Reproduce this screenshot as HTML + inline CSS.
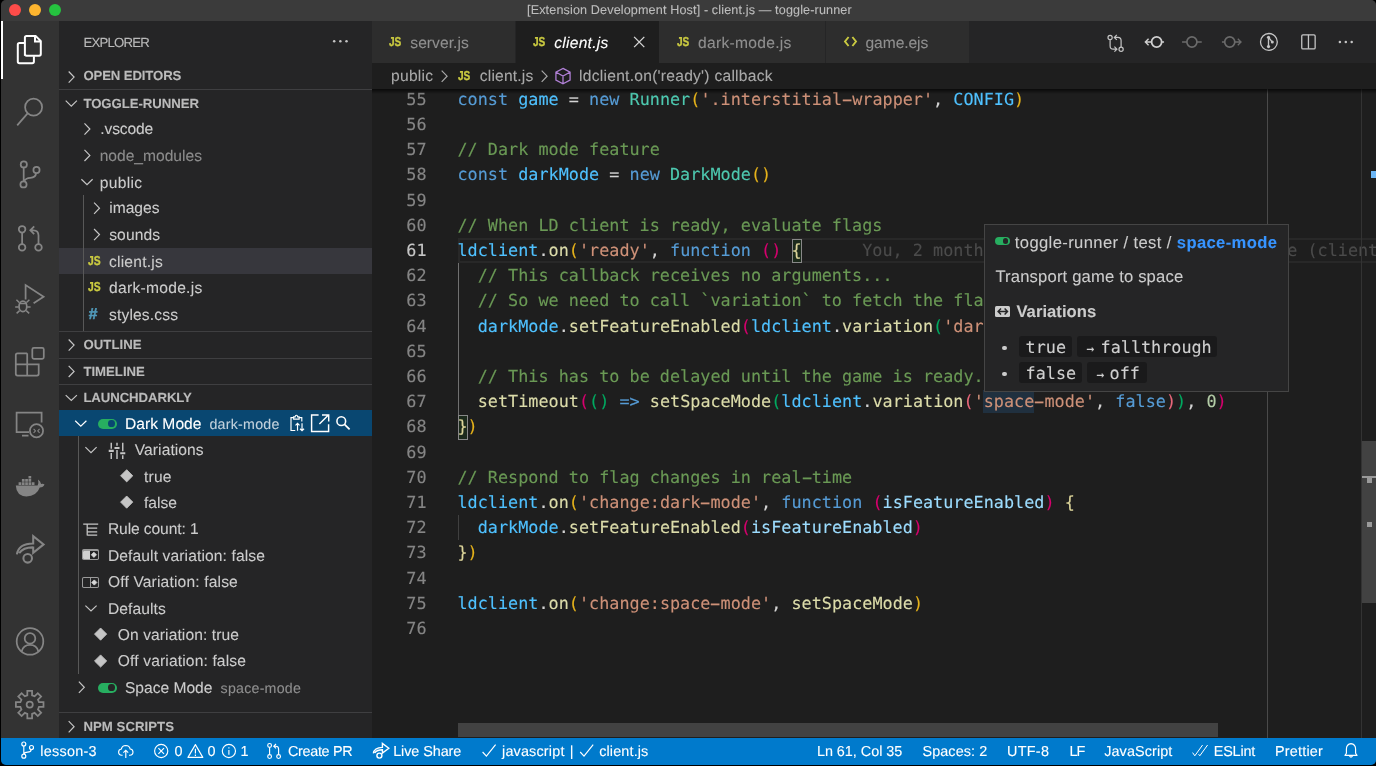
<!DOCTYPE html>
<html lang="en"><head><meta charset="utf-8"><title>client.js — toggle-runner</title>
<style>

html,body{margin:0;padding:0;}
body{text-rendering:geometricPrecision;width:1376px;height:766px;overflow:hidden;background:#000;position:relative;font-family:"Liberation Sans",sans-serif;}
.t{position:absolute;white-space:pre;display:block;-webkit-text-stroke:0.1px;}
#window{will-change:transform;}
svg{overflow:visible;}
.hy{display:inline-block;transform:translateY(-0.3px) scale(1.95,1.2);}

</style></head>
<body>
<div id="window" style="position:absolute;left:1px;top:0px;width:1375px;height:764.5px;background:#1e1e1e;overflow:hidden;border-radius:5px 5px 5px 5px;">
 <div id="titlebar" style="position:absolute;left:0px;top:0px;width:1375px;height:21.3px;background:#3b3b3b;">
  <div style="position:absolute;left:8.1px;top:3.9px;width:12px;height:12px;background:#fd4c49;border-radius:6px;"></div>
  <div style="position:absolute;left:28px;top:3.9px;width:12px;height:12px;background:#fdb52f;border-radius:6px;"></div>
  <div style="position:absolute;left:47.9px;top:3.9px;width:12px;height:12px;background:#25c23f;border-radius:6px;"></div>
  <span class="t" style="left:526px;top:1px;font-size:12.6px;line-height:19px;color:#bdbdbd;letter-spacing:0.138px;">[Extension Development Host] - client.js — toggle-runner</span>
 </div>
 <div id="activitybar" style="position:absolute;left:0px;top:21.3px;width:57.8px;height:716.7px;background:#333333;">
  <div style="position:absolute;left:0px;top:0px;width:2.2px;height:57.6px;background:#ffffff;"></div>
  <svg style="position:absolute;left:0px;top:-0.3px;stroke-linejoin:round;" width="58" height="717" viewBox="1 21 58 717" fill="none" stroke="#ffffff" stroke-width="2"><path d="M24.9 55.8 V37.6 Q24.9 35.9 26.6 35.9 H35.6 L40.8 41.1 V54.1 Q40.8 55.8 39.1 55.8 H26.6 Q24.9 55.8 24.9 54.1 Z M35 36.2 V41.6 H40.5" stroke-linejoin="miter"/><path d="M24.7 43 H19.5 Q17.8 43 17.8 44.7 V61.6 Q17.8 63.3 19.5 63.3 H32.2 Q33.9 63.3 33.9 61.6 V56.2"/></svg>
  <svg style="position:absolute;left:0px;top:-0.3px;stroke-linejoin:round;" width="58" height="717" viewBox="1 21 58 717" fill="none" stroke="#858585" stroke-width="1.75"><circle cx="33.6" cy="107.2" r="8.5"/><path d="M27.6 113.4 L17.2 125.4"/></svg>
  <svg style="position:absolute;left:0px;top:-0.3px;stroke-linejoin:round;" width="58" height="717" viewBox="1 21 58 717" fill="none" stroke="#858585" stroke-width="1.75"><circle cx="23.8" cy="164.4" r="3.1"/><circle cx="36.5" cy="170" r="3.1"/><circle cx="23.5" cy="184.4" r="3.1"/><path d="M23.7 167.6 V181.2 M36.2 173.2 Q35.6 177.6 30.4 177.8 Q25.6 178 24 181.4"/></svg>
  <svg style="position:absolute;left:0px;top:-0.3px;stroke-linejoin:round;" width="58" height="717" viewBox="1 21 58 717" fill="none" stroke="#858585" stroke-width="1.75"><circle cx="22.1" cy="229.3" r="3.3"/><circle cx="22.1" cy="247.4" r="3.3"/><circle cx="38.5" cy="247.4" r="3.3"/><path d="M22.1 232.7 V244 M38.5 244 V235.5 Q38.5 230.3 33.4 230.3 H30.6 M34.2 226.4 L30.3 230.3 L34.2 234.2" stroke-linejoin="miter"/></svg>
  <svg style="position:absolute;left:0px;top:-0.3px;stroke-linejoin:round;" width="58" height="717" viewBox="1 21 58 717" fill="none" stroke="#858585" stroke-width="1.75"><path d="M25.6 299.5 V285 L43.6 296.7 L33.6 303.2" stroke-linejoin="miter"/><ellipse cx="22.9" cy="306.4" rx="3.9" ry="5.2"/><path d="M18.9 303.6 H26.9 M18.7 306.9 H15.2 M27.1 306.9 H30.6 M19.3 302.5 L16.4 299.8 M26.5 302.5 L29.4 299.8 M19.6 310.6 L16.6 313.4 M26.2 310.6 L29.2 313.4" stroke-width="1.5"/></svg>
  <svg style="position:absolute;left:0px;top:-0.3px;stroke-linejoin:round;" width="58" height="717" viewBox="1 21 58 717" fill="none" stroke="#858585" stroke-width="1.75"><path d="M27.2 353.3 H17.5 Q15.8 353.3 15.8 355 V373.8 Q15.8 375.5 17.5 375.5 H37 Q38.7 375.5 38.7 373.8 V364.4 H15.8 M27.2 353.3 V375.5" stroke-linejoin="miter"/><rect x="32.3" y="347.8" width="11.5" height="11.1" rx="1.6"/></svg>
  <svg style="position:absolute;left:0px;top:-0.3px;stroke-linejoin:round;" width="58" height="717" viewBox="1 21 58 717" fill="none" stroke="#858585" stroke-width="1.75"><path d="M29 432.2 H16.6 V412.7 H41.6 V422.6 M22 435.6 H28.5" stroke-linejoin="miter"/><circle cx="36.5" cy="430.7" r="6.6"/><path d="M33.6 428.8 L35.5 430.8 L33.6 432.8 M39.6 428.8 L37.7 430.8 L39.6 432.8" stroke-width="1.1"/></svg>
  <svg style="position:absolute;left:0px;top:-0.3px;" width="58" height="717" viewBox="1 21 58 717" fill="#858585" stroke="none" stroke-width="0"><path d="M15.8 485.6 H37.6 Q38.9 482.6 38 479.6 Q40.6 481.2 41.1 484 Q43.2 483.4 44.5 484.6 Q43.4 487.4 39.8 487.6 Q36.6 496.4 26.4 496.4 Q16.4 496.2 15.8 485.6 Z"/><path d="M18.6 482.3 h2.7 v2.7 h-2.7 z M21.9 482.3 h2.7 v2.7 h-2.7 z M25.2 482.3 h2.7 v2.7 h-2.7 z M28.5 482.3 h2.7 v2.7 h-2.7 z M31.8 482.3 h2.7 v2.7 h-2.7 z M21.9 479.1 h2.7 v2.7 h-2.7 z M25.2 479.1 h2.7 v2.7 h-2.7 z M28.5 479.1 h2.7 v2.7 h-2.7 z M28.5 475.9 h2.7 v2.7 h-2.7 z"/></svg>
  <svg style="position:absolute;left:0px;top:-0.3px;stroke-linejoin:round;" width="58" height="717" viewBox="1 21 58 717" fill="none" stroke="#858585" stroke-width="2.05"><path d="M16.9 554.4 Q18.4 543.6 33.2 543.4 V536.2 L43.6 544.4 L33.2 552.8 V547.4 Q23.4 547.2 19.2 553.2" stroke-linejoin="miter"/><circle cx="27.7" cy="558.3" r="4.3"/></svg>
  <svg style="position:absolute;left:0px;top:-0.3px;stroke-linejoin:round;" width="58" height="717" viewBox="1 21 58 717" fill="none" stroke="#858585" stroke-width="1.75"><circle cx="30" cy="641.4" r="13.3"/><circle cx="30" cy="638.4" r="5.3"/><path d="M21.6 651.4 Q23.4 644.8 30 644.8 Q36.6 644.8 38.4 651.4"/></svg>
  <svg style="position:absolute;left:0px;top:-0.3px;stroke-linejoin:round;" width="58" height="717" viewBox="1 21 58 717" fill="none" stroke="#858585" stroke-width="1.75"><path d="M27.33 690.80 L32.07 690.80 L32.08 695.30 L34.59 696.34 L37.78 693.17 L41.13 696.52 L37.96 699.70 L39.00 702.22 L43.50 702.23 L43.50 706.97 L39.00 706.98 L37.96 709.49 L41.13 712.68 L37.78 716.03 L34.60 712.86 L32.08 713.90 L32.07 718.40 L27.33 718.40 L27.32 713.90 L24.81 712.86 L21.62 716.03 L18.27 712.68 L21.44 709.50 L20.40 706.98 L15.90 706.97 L15.90 702.23 L20.40 702.22 L21.44 699.71 L18.27 696.52 L21.62 693.17 L24.80 696.34 L27.32 695.30 Z" stroke-linejoin="miter"/><circle cx="29.7" cy="704.6" r="3.1"/></svg>
 </div>
 <div id="sidebar" style="position:absolute;left:57.8px;top:21.3px;width:313.6px;height:716.7px;background:#252526;overflow:hidden;">
  <span class="t" style="left:24.6px;top:11.7px;font-size:13.2px;line-height:20px;color:#bbbbbb;letter-spacing:-0.761px;">EXPLORER</span>
  <svg style="position:absolute;left:-0.8px;top:-0.3px;" width="315" height="717" viewBox="58 21 315 717" fill="#c5c5c5" stroke="none" stroke-width="0"><circle cx="334.2" cy="41.3" r="1.25"/><circle cx="340.35" cy="41.3" r="1.25"/><circle cx="346.5" cy="41.3" r="1.25"/></svg>
  <span class="t" style="left:24.6px;top:44.7px;font-size:13.2px;line-height:20px;color:#bbbbbb;font-weight:700;letter-spacing:-0.134px;">OPEN EDITORS</span>
  <svg style="position:absolute;left:8.2px;top:48.7px;" width="10" height="15" viewBox="0 0 10 15" fill="none" stroke="#c5c5c5" stroke-width="1.2"><g transform="translate(0.8 0.5) scale(1.0000 1.0000)"><path d="M0.87 1 L6.27 6.60 L0.87 12.20"/></g></svg>
  <div style="position:absolute;left:0px;top:68.1px;width:313.6px;height:1px;background:#3f3f41;"></div>
  <span class="t" style="left:24.6px;top:72.7px;font-size:13.2px;line-height:20px;color:#bbbbbb;font-weight:700;letter-spacing:-0.058px;">TOGGLE-RUNNER</span>
  <svg style="position:absolute;left:5.2px;top:77.7px;" width="15" height="10" viewBox="0 0 15 10" fill="none" stroke="#c5c5c5" stroke-width="1.2"><g transform="translate(0.7 0.8) scale(1.0000 1.0000)"><path d="M1 0.87 L6.60 6.27 L12.20 0.87"/></g></svg>
  <div style="position:absolute;left:0px;top:310px;width:313.6px;height:1px;background:#3f3f41;"></div>
  <span class="t" style="left:24.6px;top:313.7px;font-size:13.2px;line-height:20px;color:#bbbbbb;font-weight:700;letter-spacing:0.053px;">OUTLINE</span>
  <svg style="position:absolute;left:8.2px;top:316.7px;" width="10" height="15" viewBox="0 0 10 15" fill="none" stroke="#c5c5c5" stroke-width="1.2"><g transform="translate(0.8 0.5) scale(1.0000 1.0000)"><path d="M0.87 1 L6.27 6.60 L0.87 12.20"/></g></svg>
  <div style="position:absolute;left:0px;top:336.3px;width:313.6px;height:1px;background:#3f3f41;"></div>
  <span class="t" style="left:24.6px;top:340.7px;font-size:13.2px;line-height:20px;color:#bbbbbb;font-weight:700;letter-spacing:-0.012px;">TIMELINE</span>
  <svg style="position:absolute;left:8.2px;top:342.7px;" width="10" height="16" viewBox="0 0 10 16" fill="none" stroke="#c5c5c5" stroke-width="1.2"><g transform="translate(0.8 0.8) scale(1.0000 1.0000)"><path d="M0.87 1 L6.27 6.60 L0.87 12.20"/></g></svg>
  <div style="position:absolute;left:0px;top:362.5px;width:313.6px;height:1px;background:#3f3f41;"></div>
  <span class="t" style="left:24.6px;top:366.7px;font-size:13.2px;line-height:20px;color:#bbbbbb;font-weight:700;letter-spacing:-0.084px;">LAUNCHDARKLY</span>
  <svg style="position:absolute;left:5.2px;top:372.7px;" width="15" height="9" viewBox="0 0 15 9" fill="none" stroke="#c5c5c5" stroke-width="1.2"><g transform="translate(0.7 0.2) scale(1.0000 1.0000)"><path d="M1 0.87 L6.60 6.27 L12.20 0.87"/></g></svg>
  <div style="position:absolute;left:0px;top:690.7px;width:313.6px;height:1px;background:#3f3f41;"></div>
  <span class="t" style="left:24.6px;top:695.7px;font-size:13.2px;line-height:20px;color:#bbbbbb;font-weight:700;letter-spacing:0.045px;">NPM SCRIPTS</span>
  <svg style="position:absolute;left:8.2px;top:698.7px;" width="10" height="15" viewBox="0 0 10 15" fill="none" stroke="#c5c5c5" stroke-width="1.2"><g transform="translate(0.8 0.1) scale(1.0000 1.0000)"><path d="M0.87 1 L6.27 6.60 L0.87 12.20"/></g></svg>
  <div style="position:absolute;left:0px;top:226.6px;width:313.6px;height:26.1px;background:#37373d;"></div>
  <div style="position:absolute;left:24.7px;top:173.7px;width:1px;height:136.3px;background:#585858;"></div>
  <svg style="position:absolute;left:24.2px;top:100.7px;" width="10" height="15" viewBox="0 0 10 15" fill="none" stroke="#c5c5c5" stroke-width="1.2"><g transform="translate(0.6 0.4) scale(1.0000 1.0000)"><path d="M0.87 1 L6.27 6.60 L0.87 12.20"/></g></svg>
  <span class="t" style="left:41.5px;top:96.7px;font-size:15.6px;line-height:23px;color:#cccccc;letter-spacing:-0.137px;">.vscode</span>
  <svg style="position:absolute;left:24.2px;top:126.7px;" width="10" height="15" viewBox="0 0 10 15" fill="none" stroke="#c5c5c5" stroke-width="1.2"><g transform="translate(0.6 0.8) scale(1.0000 1.0000)"><path d="M0.87 1 L6.27 6.60 L0.87 12.20"/></g></svg>
  <span class="t" style="left:40.9px;top:123.7px;font-size:15.6px;line-height:23px;color:#8c8c8c;letter-spacing:-0.004px;">node_modules</span>
  <svg style="position:absolute;left:21.2px;top:156.7px;" width="15" height="9" viewBox="0 0 15 9" fill="none" stroke="#c5c5c5" stroke-width="1.2"><g transform="translate(0.4 0.4) scale(1.0000 1.0000)"><path d="M1 0.87 L6.60 6.27 L12.20 0.87"/></g></svg>
  <span class="t" style="left:40.9px;top:150.7px;font-size:15.6px;line-height:23px;color:#cccccc;letter-spacing:0.307px;">public</span>
  <svg style="position:absolute;left:34.2px;top:179.7px;" width="9" height="15" viewBox="0 0 9 15" fill="none" stroke="#c5c5c5" stroke-width="1.2"><g transform="translate(0.2 0.6) scale(1.0000 1.0000)"><path d="M0.87 1 L6.27 6.60 L0.87 12.20"/></g></svg>
  <span class="t" style="left:50.4px;top:175.7px;font-size:15.6px;line-height:23px;color:#cccccc;letter-spacing:0.002px;">images</span>
  <svg style="position:absolute;left:34.2px;top:205.7px;" width="9" height="16" viewBox="0 0 9 16" fill="none" stroke="#c5c5c5" stroke-width="1.2"><g transform="translate(0.2 1) scale(1.0000 1.0000)"><path d="M0.87 1 L6.27 6.60 L0.87 12.20"/></g></svg>
  <span class="t" style="left:50.4px;top:202.7px;font-size:15.6px;line-height:23px;color:#cccccc;letter-spacing:0.116px;">sounds</span>
  <svg style="position:absolute;left:29.2px;top:231.7px" width="14.6" height="16" viewBox="0 0 14.6 16"><text x="0" y="12" font-family="Liberation Sans,sans-serif" font-weight="700" font-size="13" fill="#cbcb41" stroke="#cbcb41" stroke-width="0.35" textLength="12.6" lengthAdjust="spacingAndGlyphs">JS</text></svg>
  <span class="t" style="left:50.2px;top:229.7px;font-size:15.6px;line-height:23px;color:#cccccc;letter-spacing:0.220px;">client.js</span>
  <svg style="position:absolute;left:29.2px;top:258.1px" width="14.6" height="16" viewBox="0 0 14.6 16"><text x="0" y="12" font-family="Liberation Sans,sans-serif" font-weight="700" font-size="13" fill="#cbcb41" stroke="#cbcb41" stroke-width="0.35" textLength="12.6" lengthAdjust="spacingAndGlyphs">JS</text></svg>
  <span class="t" style="left:50.2px;top:255.7px;font-size:15.6px;line-height:23px;color:#cccccc;letter-spacing:0.286px;">dark-mode.js</span>
  <span class="t" style="left:29.8px;top:281.7px;font-size:15.6px;line-height:23px;color:#519aba;font-weight:700;font-style:italic;letter-spacing:2.924px;-webkit-text-stroke:0.55px #519aba;">#</span>
  <span class="t" style="left:50.2px;top:282.7px;font-size:15.6px;line-height:23px;color:#cccccc;letter-spacing:0.159px;">styles.css</span>
  <div style="position:absolute;left:0px;top:388.8px;width:313.6px;height:26.4px;background:#094771;"></div>
  <div style="position:absolute;left:19.6px;top:415.2px;width:1px;height:237.6px;background:#585858;"></div>
  <svg style="position:absolute;left:15.2px;top:397.7px;" width="15" height="10" viewBox="0 0 15 10" fill="none" stroke="#ffffff" stroke-width="1.2"><g transform="translate(0.2 0.9) scale(1.0000 1.0000)"><path d="M1 0.87 L6.60 6.27 L12.20 0.87"/></g></svg>
  <div style="position:absolute;left:39.2px;top:397.5px;width:19.1px;height:10px;background:#27ae60;border-radius:5.0px;"></div>
  <div style="position:absolute;left:49.65px;top:399.15px;width:6.7px;height:6.7px;background:#094771;border-radius:50%;"></div>
  <span class="t" style="left:66.1px;top:391.7px;font-size:15.6px;line-height:23px;color:#ffffff;letter-spacing:0.045px;">Dark Mode</span>
  <span class="t" style="left:150.6px;top:393.7px;font-size:14.2px;line-height:21px;color:#c3d2dd;letter-spacing:0.270px;">dark-mode</span>
  <svg style="position:absolute;left:228.2px;top:392.7px;" width="20" height="20" viewBox="0 0 20 20" fill="none" stroke="#ffffff" stroke-width="1.05"><g transform="translate(0.4 0.1) scale(1.1250 1.1250)"><path d="M5.6 3.2 H3.2 V14.6 H7 M10.4 3.2 H12.8 V6.6 M5.6 4.4 V2.4 H6.9 Q7 1 8 1 Q9 1 9.1 2.4 H10.4 V4.4 Z M9 14.8 V8.2 M7.2 10 L9 8.2 L10.8 10 M13 8.2 V14.8 M11.2 13 L13 14.8 L14.8 13"/></g></svg>
  <svg style="position:absolute;left:-0.8px;top:-0.3px;" width="315" height="717" viewBox="58 21 315 717" fill="none" stroke="#ffffff" stroke-width="1.45"><path d="M318.6 415 H311.6 V431.4 H328.6 V424.2 M319.4 424 L328.4 415 M322 414.9 H328.7 V421.6"/></svg>
  <svg style="position:absolute;left:275.2px;top:392.7px;" width="19" height="18" viewBox="0 0 19 18" fill="none" stroke="#ffffff" stroke-width="1"><g transform="translate(0.8 0.7) scale(1.0125 1.0125)"><circle cx="6.4" cy="6.4" r="4.3" stroke-width="1.55"/><path d="M9.6 9.6 L14.6 14.6" stroke-width="1.7"/></g></svg>
  <svg style="position:absolute;left:25.2px;top:424.7px;" width="15" height="9" viewBox="0 0 15 9" fill="none" stroke="#c5c5c5" stroke-width="1.2"><g transform="translate(0.4 0.3) scale(1.0000 1.0000)"><path d="M1 0.87 L6.60 6.27 L12.20 0.87"/></g></svg>
  <svg style="position:absolute;left:48.2px;top:419.7px;" width="21" height="21" viewBox="0 0 21 21" fill="none" stroke="#c5c5c5" stroke-width="1.3"><g transform="translate(0.8 0.7) scale(1.1500 1.1500)"><path d="M3 1 V6.2 M3 9.8 V15 M8 1 V3.6 M8 7.2 V15 M13 1 V8.2 M13 11.8 V15" stroke-width="1.25"/><path d="M0.8 8 H5.2 M5.8 5.4 H10.2 M10.8 10 H15.2" stroke-width="1.8"/></g></svg>
  <span class="t" style="left:76px;top:417.7px;font-size:15.6px;line-height:23px;color:#cccccc;letter-spacing:0.069px;">Variations</span>
  <svg style="position:absolute;left:60.2px;top:446.7px;" width="16" height="16" viewBox="0 0 16 16" fill="none" stroke="#c5c5c5" stroke-width="1"><g transform="translate(0.6 0.7) scale(1.0000 1.0000)"><path d="M7.1 0.3 L13.899999999999999 7.1 L7.1 13.899999999999999 L0.3 7.1 Z" fill="#c5c5c5" stroke="#c5c5c5" stroke-width="0.9" stroke-linejoin="round" transform="translate(7.1 7.1) scale(0.9) translate(-7.1 -7.1)"/></g></svg>
  <span class="t" style="left:85.1px;top:444.7px;font-size:15.6px;line-height:23px;color:#cccccc;letter-spacing:0.255px;">true</span>
  <svg style="position:absolute;left:60.2px;top:473.7px;" width="16" height="16" viewBox="0 0 16 16" fill="none" stroke="#c5c5c5" stroke-width="1"><g transform="translate(0.6 0) scale(1.0000 1.0000)"><path d="M7.1 0.3 L13.899999999999999 7.1 L7.1 13.899999999999999 L0.3 7.1 Z" fill="#c5c5c5" stroke="#c5c5c5" stroke-width="0.9" stroke-linejoin="round" transform="translate(7.1 7.1) scale(0.9) translate(-7.1 -7.1)"/></g></svg>
  <span class="t" style="left:85.1px;top:470.7px;font-size:15.6px;line-height:23px;color:#cccccc;letter-spacing:0.010px;">false</span>
  <svg style="position:absolute;left:24.2px;top:501.7px;" width="17" height="16" viewBox="0 0 17 16" fill="none" stroke="#c5c5c5" stroke-width="1.25"><g transform="translate(0.2 0) scale(1.0000 1.0000)"><path d="M0 1.2 H15 M4 1.2 V12.6 M4 5.2 H14 M4 8.8 H14 M4 12.2 H14"/></g></svg>
  <span class="t" style="left:49.1px;top:496.7px;font-size:15.6px;line-height:23px;color:#cccccc;letter-spacing:-0.094px;">Rule count: 1</span>
  <div style="position:absolute;left:23.5px;top:528.2px;width:16.8px;height:10.6px;background:#9a9a9a;border-radius:1.8px;"></div>
  <div style="position:absolute;left:24.7px;top:529.4px;width:14.4px;height:8.2px;background:#252526;border-radius:0.8px;"></div>
  <div style="position:absolute;left:24.7px;top:529.4px;width:6.6px;height:8.2px;background:#d0d0d0;border-radius:0.8px 0 0 0.8px;"></div>
  <svg style="position:absolute;left:31.2px;top:529.7px;" width="9" height="8" viewBox="0 0 9 8" fill="none" stroke="#d8d8d8" stroke-width="1"><g transform="translate(0.7 0.6) scale(1.0000 1.0000)"><path d="M3.2 0.3 L6.1000000000000005 3.2 L3.2 6.1000000000000005 L0.3 3.2 Z" fill="#d8d8d8" stroke="#d8d8d8" stroke-width="0.9" stroke-linejoin="round" transform="translate(3.2 3.2) scale(0.9) translate(-3.2 -3.2)"/></g></svg>
  <span class="t" style="left:49.1px;top:523.7px;font-size:15.6px;line-height:23px;color:#cccccc;letter-spacing:0.119px;">Default variation: false</span>
  <div style="position:absolute;left:23.5px;top:555.9px;width:16.8px;height:10.6px;background:#9a9a9a;border-radius:1.8px;"></div>
  <div style="position:absolute;left:24.7px;top:557.1px;width:14.4px;height:8.2px;background:#252526;border-radius:0.8px;"></div>
  <div style="position:absolute;left:30.8px;top:557.1px;width:1.2px;height:8.2px;background:#9a9a9a;"></div>
  <svg style="position:absolute;left:32.2px;top:557.7px;" width="8" height="8" viewBox="0 0 8 8" fill="none" stroke="#d8d8d8" stroke-width="1"><g transform="translate(0.1 0.3) scale(1.0000 1.0000)"><path d="M3.2 0.3 L6.1000000000000005 3.2 L3.2 6.1000000000000005 L0.3 3.2 Z" fill="#d8d8d8" stroke="#d8d8d8" stroke-width="0.9" stroke-linejoin="round" transform="translate(3.2 3.2) scale(0.9) translate(-3.2 -3.2)"/></g></svg>
  <span class="t" style="left:49.1px;top:549.7px;font-size:15.6px;line-height:23px;color:#cccccc;letter-spacing:0.161px;">Off Variation: false</span>
  <svg style="position:absolute;left:25.2px;top:582.7px;" width="15" height="10" viewBox="0 0 15 10" fill="none" stroke="#c5c5c5" stroke-width="1.2"><g transform="translate(0.4 0.7) scale(1.0000 1.0000)"><path d="M1 0.87 L6.60 6.27 L12.20 0.87"/></g></svg>
  <span class="t" style="left:49.1px;top:576.7px;font-size:15.6px;line-height:23px;color:#cccccc;letter-spacing:0.109px;">Defaults</span>
  <svg style="position:absolute;left:34.2px;top:605.7px;" width="16" height="16" viewBox="0 0 16 16" fill="none" stroke="#c5c5c5" stroke-width="1"><g transform="translate(0.5 0) scale(1.0000 1.0000)"><path d="M7.1 0.3 L13.899999999999999 7.1 L7.1 13.899999999999999 L0.3 7.1 Z" fill="#c5c5c5" stroke="#c5c5c5" stroke-width="0.9" stroke-linejoin="round" transform="translate(7.1 7.1) scale(0.9) translate(-7.1 -7.1)"/></g></svg>
  <span class="t" style="left:59px;top:602.7px;font-size:15.6px;line-height:23px;color:#cccccc;letter-spacing:0.086px;">On variation: true</span>
  <svg style="position:absolute;left:34.2px;top:631.7px;" width="16" height="17" viewBox="0 0 16 17" fill="none" stroke="#c5c5c5" stroke-width="1"><g transform="translate(0.5 0.9) scale(1.0000 1.0000)"><path d="M7.1 0.3 L13.899999999999999 7.1 L7.1 13.899999999999999 L0.3 7.1 Z" fill="#c5c5c5" stroke="#c5c5c5" stroke-width="0.9" stroke-linejoin="round" transform="translate(7.1 7.1) scale(0.9) translate(-7.1 -7.1)"/></g></svg>
  <span class="t" style="left:59px;top:628.7px;font-size:15.6px;line-height:23px;color:#cccccc;letter-spacing:0.143px;">Off variation: false</span>
  <svg style="position:absolute;left:19.2px;top:658.7px;" width="9" height="15" viewBox="0 0 9 15" fill="none" stroke="#c5c5c5" stroke-width="1.2"><g transform="translate(0 0.7) scale(1.0000 1.0000)"><path d="M0.87 1 L6.27 6.60 L0.87 12.20"/></g></svg>
  <div style="position:absolute;left:39.2px;top:661.5px;width:19.1px;height:10px;background:#27ae60;border-radius:5.0px;"></div>
  <div style="position:absolute;left:49.65px;top:663.15px;width:6.7px;height:6.7px;background:#252526;border-radius:50%;"></div>
  <span class="t" style="left:66.1px;top:655.7px;font-size:15.6px;line-height:23px;color:#cccccc;letter-spacing:0.001px;">Space Mode</span>
  <span class="t" style="left:161.8px;top:657.7px;font-size:14.2px;line-height:21px;color:#8f8f8f;letter-spacing:0.236px;">space-mode</span>
 </div>
 <div id="tabs" style="position:absolute;left:371.4px;top:21.3px;width:1003.6px;height:42px;background:#252526;">
  <div style="position:absolute;left:0px;top:0px;width:142.2px;height:42px;background:#2d2d2d;"></div>
  <div style="position:absolute;left:143.2px;top:0px;width:143.5px;height:42px;background:#1e1e1e;"></div>
  <div style="position:absolute;left:286.7px;top:0px;width:166.2px;height:42px;background:#2d2d2d;"></div>
  <div style="position:absolute;left:453.9px;top:0px;width:142.9px;height:42px;background:#2d2d2d;"></div>
  <svg style="position:absolute;left:17px;top:12.6px" width="14.3" height="16" viewBox="0 0 14.3 16"><text x="0" y="12" font-family="Liberation Sans,sans-serif" font-weight="700" font-size="13" fill="#cbcb41" stroke="#cbcb41" stroke-width="0.35" textLength="12.3" lengthAdjust="spacingAndGlyphs">JS</text></svg>
  <span class="t" style="left:37.9px;top:10.7px;font-size:15.6px;line-height:23px;color:#8f8f8f;letter-spacing:0.047px;">server.js</span>
  <svg style="position:absolute;left:160.8px;top:12.6px" width="14.3" height="16" viewBox="0 0 14.3 16"><text x="0" y="12" font-family="Liberation Sans,sans-serif" font-weight="700" font-size="13" fill="#cbcb41" stroke="#cbcb41" stroke-width="0.35" textLength="12.3" lengthAdjust="spacingAndGlyphs">JS</text></svg>
  <span class="t" style="left:181.8px;top:10.7px;font-size:15.6px;line-height:23px;color:#ffffff;font-style:italic;letter-spacing:0.265px;">client.js</span>
  <svg style="position:absolute;left:260.6px;top:14.7px;" width="13" height="13" viewBox="0 0 13 13" fill="none" stroke="#d8d8d8" stroke-width="1.3"><g transform="translate(0.6 0.4) scale(1.0000 1.0000)"><path d="M0.5 0.5 L10.7 10.7 M10.7 0.5 L0.5 10.7"/></g></svg>
  <svg style="position:absolute;left:304.7px;top:12.6px" width="14.3" height="16" viewBox="0 0 14.3 16"><text x="0" y="12" font-family="Liberation Sans,sans-serif" font-weight="700" font-size="13" fill="#cbcb41" stroke="#cbcb41" stroke-width="0.35" textLength="12.3" lengthAdjust="spacingAndGlyphs">JS</text></svg>
  <span class="t" style="left:325.6px;top:10.7px;font-size:15.6px;line-height:23px;color:#8f8f8f;letter-spacing:0.295px;">dark-mode.js</span>
  <svg style="position:absolute;left:471.6px;top:13.7px;" width="14" height="15" viewBox="0 0 14 15" fill="none" stroke="#cbcb41" stroke-width="1.9"><g transform="translate(0 0.5) scale(1.0000 1.0000)"><path d="M4.6 1.5 L1 6 L4.6 10.5 M8.4 1.5 L12 6 L8.4 10.5" stroke-linejoin="miter"/></g></svg>
  <span class="t" style="left:493.1px;top:10.7px;font-size:15.6px;line-height:23px;color:#8f8f8f;letter-spacing:-0.062px;">game.ejs</span>
  <svg style="position:absolute;left:-0.4px;top:-0.3px;" width="1004" height="43" viewBox="372 21 1004 43" fill="none" stroke="#c5c5c5" stroke-width="1.2"><circle cx="1110.1" cy="37.4" r="2.1"/><circle cx="1121.1" cy="49.2" r="2.1"/><path d="M1110.1 39.6 V46 Q1110.1 49.2 1113.3 49.2 H1116.6 M1114.4 46.7 L1116.9 49.2 L1114.4 51.7"/><path d="M1121.1 47 V40.6 Q1121.1 37.4 1117.9 37.4 H1114.6 M1116.8 34.9 L1114.3 37.4 L1116.8 39.9"/></svg>
  <svg style="position:absolute;left:771.6px;top:10.7px;" width="21" height="21" viewBox="0 0 21 21" fill="none" stroke="#d0d0d0" stroke-width="1.15"><g transform="translate(0.5 0.4) scale(1.2000 1.2000)"><circle cx="10.1" cy="8" r="4.2" stroke-width="1.5"/><path d="M5.9 8 H0.8 M3.4 5.3 L0.7 8 L3.4 10.7 M14.3 8 H16.3"/></g></svg>
  <svg style="position:absolute;left:809.6px;top:10.7px;" width="21" height="21" viewBox="0 0 21 21" fill="none" stroke="#6b6b6b" stroke-width="1.1"><g transform="translate(0.3 0.4) scale(1.2000 1.2000)"><circle cx="8" cy="8" r="4.2" stroke-width="1.4"/><path d="M3.8 8 H-0.2 M12.2 8 H16.2"/></g></svg>
  <svg style="position:absolute;left:848.6px;top:10.7px;" width="21" height="21" viewBox="0 0 21 21" fill="none" stroke="#6b6b6b" stroke-width="1.1"><g transform="translate(0.7 0.4) scale(1.2000 1.2000)"><circle cx="6.7" cy="8" r="4.2" stroke-width="1.4"/><path d="M2.5 8 H0.2 M10.9 8 H16 M13.4 5.3 L16.1 8 L13.4 10.7"/></g></svg>
  <svg style="position:absolute;left:-0.4px;top:-0.3px;" width="1004" height="43" viewBox="372 21 1004 43" fill="none" stroke="#c5c5c5" stroke-width="1.3"><circle cx="1268.9" cy="41.9" r="8.4"/><path d="M1268.5 37.6 V46.2 M1268.7 37.4 L1271.9 41.6" stroke-width="1.35"/><circle cx="1268.5" cy="37.2" r="1.55" fill="#c5c5c5" stroke="none"/><circle cx="1268.5" cy="46.6" r="1.6" fill="#c5c5c5" stroke="none"/><circle cx="1272.3" cy="42" r="1.5" fill="#c5c5c5" stroke="none"/></svg>
  <svg style="position:absolute;left:-0.4px;top:-0.3px;" width="1004" height="43" viewBox="372 21 1004 43" fill="none" stroke="#c5c5c5" stroke-width="1.3"><rect x="1301.75" y="34.85" width="13.4" height="14" rx="1.2"/><path d="M1308.45 34.85 V48.85"/></svg>
  <svg style="position:absolute;left:-0.4px;top:-0.3px;" width="1004" height="43" viewBox="372 21 1004 43" fill="#c5c5c5" stroke="none" stroke-width="0"><circle cx="1339.9" cy="42.1" r="1.25"/><circle cx="1345.8" cy="42.1" r="1.25"/><circle cx="1351.7" cy="42.1" r="1.25"/></svg>
 </div>
 <div id="breadcrumbs" style="position:absolute;left:371.4px;top:63.3px;width:1003.6px;height:25.6px;background:#1e1e1e;">
  <span class="t" style="left:18.7px;top:1.7px;font-size:15.6px;line-height:23px;color:#a9a9a9;letter-spacing:0.240px;">public</span>
  <svg style="position:absolute;left:67.6px;top:5.7px;" width="10" height="15" viewBox="0 0 10 15" fill="none" stroke="#a9a9a9" stroke-width="1.2"><g transform="translate(0.8 0.6) scale(1.0000 1.0000)"><path d="M0.87 1 L6.27 6.60 L0.87 12.20"/></g></svg>
  <svg style="position:absolute;left:86.1px;top:5px" width="14.3" height="16" viewBox="0 0 14.3 16"><text x="0" y="12" font-family="Liberation Sans,sans-serif" font-weight="700" font-size="13" fill="#cbcb41" stroke="#cbcb41" stroke-width="0.35" textLength="12.3" lengthAdjust="spacingAndGlyphs">JS</text></svg>
  <span class="t" style="left:107.4px;top:1.7px;font-size:15.6px;line-height:23px;color:#a9a9a9;letter-spacing:0.187px;">client.js</span>
  <svg style="position:absolute;left:167.6px;top:5.7px;" width="10" height="15" viewBox="0 0 10 15" fill="none" stroke="#a9a9a9" stroke-width="1.2"><g transform="translate(0.8 0.6) scale(1.0000 1.0000)"><path d="M0.87 1 L6.27 6.60 L0.87 12.20"/></g></svg>
  <svg style="position:absolute;left:180.6px;top:2.7px;" width="21" height="21" viewBox="0 0 21 21" fill="none" stroke="#b180d7" stroke-width="1.05"><g transform="translate(0.4 0.5) scale(1.2000 1.2000)"><path d="M8 1.6 L13.9 4.7 V11.3 L8 14.4 L2.1 11.3 V4.7 Z M2.3 4.8 L8 7.9 L13.7 4.8 M8 7.9 V14.3"/></g></svg>
  <span class="t" style="left:206.7px;top:1.7px;font-size:15.6px;line-height:23px;color:#a9a9a9;letter-spacing:0.258px;">ldclient.on(&#x27;ready&#x27;) callback</span>
 </div>
 <div id="editor" style="position:absolute;left:371.4px;top:88.9px;width:1003.6px;height:649.1px;background:#1e1e1e;overflow:hidden;">
  <div style="position:absolute;left:85.6px;top:149.1px;width:918px;height:25px;background:transparent;box-sizing:border-box;border:2px solid #282828;border-right:none;"></div>
  <div style="position:absolute;left:611.03px;top:301.2px;width:50.57px;height:23.2px;background:#20303f;"></div>
  <div style="position:absolute;left:419.86px;top:149.7px;width:10.1px;height:24.4px;background:#1c2a1c;box-sizing:border-box;border:1px solid #888888;"></div>
  <div style="position:absolute;left:85.6px;top:326.1px;width:10.1px;height:25px;background:#1c2a1c;box-sizing:border-box;border:1px solid #888888;"></div>
  <div style="position:absolute;left:85.6px;top:174.1px;width:1.2px;height:152px;background:#707070;"></div>
  <div style="position:absolute;left:85.6px;top:426.2px;width:1px;height:25.2px;background:#404040;"></div>
  <div id="code" style="position:absolute;left:0px;top:-2.2px;width:1003.6px;height:554.4px;font-family:'DejaVu Sans Mono','Liberation Mono',monospace;font-size:16.8px;line-height:25.2px;white-space:pre;letter-spacing:0.015px;-webkit-text-stroke:0.13px;">
   <div class="line" style="position:absolute;left:0;top:0px;height:25.2px;width:1003.6px;"><span class="ln" style="position:absolute;left:33.9px;width:20.23px;text-align:right;color:#858585">55</span><span class="lc" style="position:absolute;left:85.1px;"><span style="color:#569cd6">const</span><span style="color:#d4d4d4"> </span><span style="color:#4fc1ff">game</span><span style="color:#d4d4d4"> = </span><span style="color:#569cd6">new</span><span style="color:#d4d4d4"> </span><span style="color:#4ec9b0">Runner</span><span style="color:#e5b21b">(</span><span style="color:#ce9178">&#x27;.interstitial<span class="hy">-</span>wrapper&#x27;</span><span style="color:#d4d4d4">, </span><span style="color:#4fc1ff">CONFIG</span><span style="color:#e5b21b">)</span></span></div>
   <div class="line" style="position:absolute;left:0;top:25.2px;height:25.2px;width:1003.6px;"><span class="ln" style="position:absolute;left:33.9px;width:20.23px;text-align:right;color:#858585">56</span><span class="lc" style="position:absolute;left:85.1px;"></span></div>
   <div class="line" style="position:absolute;left:0;top:50.4px;height:25.2px;width:1003.6px;"><span class="ln" style="position:absolute;left:33.9px;width:20.23px;text-align:right;color:#858585">57</span><span class="lc" style="position:absolute;left:85.1px;"><span style="color:#6a9955">// Dark mode feature</span></span></div>
   <div class="line" style="position:absolute;left:0;top:75.6px;height:25.2px;width:1003.6px;"><span class="ln" style="position:absolute;left:33.9px;width:20.23px;text-align:right;color:#858585">58</span><span class="lc" style="position:absolute;left:85.1px;"><span style="color:#569cd6">const</span><span style="color:#d4d4d4"> </span><span style="color:#4fc1ff">darkMode</span><span style="color:#d4d4d4"> = </span><span style="color:#569cd6">new</span><span style="color:#d4d4d4"> </span><span style="color:#4ec9b0">DarkMode</span><span style="color:#e5b21b">()</span></span></div>
   <div class="line" style="position:absolute;left:0;top:100.8px;height:25.2px;width:1003.6px;"><span class="ln" style="position:absolute;left:33.9px;width:20.23px;text-align:right;color:#858585">59</span><span class="lc" style="position:absolute;left:85.1px;"></span></div>
   <div class="line" style="position:absolute;left:0;top:126px;height:25.2px;width:1003.6px;"><span class="ln" style="position:absolute;left:33.9px;width:20.23px;text-align:right;color:#858585">60</span><span class="lc" style="position:absolute;left:85.1px;"><span style="color:#6a9955">// When LD client is ready, evaluate flags</span></span></div>
   <div class="line" style="position:absolute;left:0;top:151.2px;height:25.2px;width:1003.6px;"><span class="ln" style="position:absolute;left:33.9px;width:20.23px;text-align:right;color:#c6c6c6">61</span><span class="lc" style="position:absolute;left:85.1px;"><span style="color:#4fc1ff">ldclient</span><span style="color:#d4d4d4">.</span><span style="color:#dcdcaa">on</span><span style="color:#e5b21b">(</span><span style="color:#ce9178">&#x27;ready&#x27;</span><span style="color:#d4d4d4">, </span><span style="color:#569cd6">function</span><span style="color:#d4d4d4"> </span><span style="color:#d6006e">()</span><span style="color:#d4d4d4"> </span><span style="color:#ddd59a">{</span><span style="color:#4b4b4b;margin-left:60.62px">You, 2 months ago • Adds space mode feature (client-side flag)</span></span></div>
   <div class="line" style="position:absolute;left:0;top:176.4px;height:25.2px;width:1003.6px;"><span class="ln" style="position:absolute;left:33.9px;width:20.23px;text-align:right;color:#858585">62</span><span class="lc" style="position:absolute;left:85.1px;"><span style="color:#d4d4d4">  </span><span style="color:#6a9955">// This callback receives no arguments...</span></span></div>
   <div class="line" style="position:absolute;left:0;top:201.6px;height:25.2px;width:1003.6px;"><span class="ln" style="position:absolute;left:33.9px;width:20.23px;text-align:right;color:#858585">63</span><span class="lc" style="position:absolute;left:85.1px;"><span style="color:#d4d4d4">  </span><span style="color:#6a9955">// So we need to call `variation` to fetch the flag value</span></span></div>
   <div class="line" style="position:absolute;left:0;top:226.8px;height:25.2px;width:1003.6px;"><span class="ln" style="position:absolute;left:33.9px;width:20.23px;text-align:right;color:#858585">64</span><span class="lc" style="position:absolute;left:85.1px;"><span style="color:#d4d4d4">  </span><span style="color:#4fc1ff">darkMode</span><span style="color:#d4d4d4">.</span><span style="color:#dcdcaa">setFeatureEnabled</span><span style="color:#d6006e">(</span><span style="color:#4fc1ff">ldclient</span><span style="color:#d4d4d4">.</span><span style="color:#dcdcaa">variation</span><span style="color:#00a960">(</span><span style="color:#ce9178">&#x27;dark<span class="hy">-</span>mode&#x27;</span><span style="color:#d4d4d4">, </span><span style="color:#569cd6">false</span><span style="color:#00a960">)</span><span style="color:#d6006e">)</span></span></div>
   <div class="line" style="position:absolute;left:0;top:252px;height:25.2px;width:1003.6px;"><span class="ln" style="position:absolute;left:33.9px;width:20.23px;text-align:right;color:#858585">65</span><span class="lc" style="position:absolute;left:85.1px;"></span></div>
   <div class="line" style="position:absolute;left:0;top:277.2px;height:25.2px;width:1003.6px;"><span class="ln" style="position:absolute;left:33.9px;width:20.23px;text-align:right;color:#858585">66</span><span class="lc" style="position:absolute;left:85.1px;"><span style="color:#d4d4d4">  </span><span style="color:#6a9955">// This has to be delayed until the game is ready.</span></span></div>
   <div class="line" style="position:absolute;left:0;top:302.4px;height:25.2px;width:1003.6px;"><span class="ln" style="position:absolute;left:33.9px;width:20.23px;text-align:right;color:#858585">67</span><span class="lc" style="position:absolute;left:85.1px;"><span style="color:#d4d4d4">  </span><span style="color:#dcdcaa">setTimeout</span><span style="color:#d6006e">(</span><span style="color:#00a960">()</span><span style="color:#d4d4d4"> </span><span style="color:#569cd6">=&gt;</span><span style="color:#d4d4d4"> </span><span style="color:#dcdcaa">setSpaceMode</span><span style="color:#00a960">(</span><span style="color:#4fc1ff">ldclient</span><span style="color:#d4d4d4">.</span><span style="color:#dcdcaa">variation</span><span style="color:#e8677a">(</span><span style="color:#ce9178">&#x27;space<span class="hy">-</span>mode&#x27;</span><span style="color:#d4d4d4">, </span><span style="color:#569cd6">false</span><span style="color:#e8677a">)</span><span style="color:#00a960">)</span><span style="color:#d4d4d4">, </span><span style="color:#b5cea8">0</span><span style="color:#d6006e">)</span></span></div>
   <div class="line" style="position:absolute;left:0;top:327.6px;height:25.2px;width:1003.6px;"><span class="ln" style="position:absolute;left:33.9px;width:20.23px;text-align:right;color:#858585">68</span><span class="lc" style="position:absolute;left:85.1px;"><span style="color:#ddd59a">}</span><span style="color:#e5b21b">)</span></span></div>
   <div class="line" style="position:absolute;left:0;top:352.8px;height:25.2px;width:1003.6px;"><span class="ln" style="position:absolute;left:33.9px;width:20.23px;text-align:right;color:#858585">69</span><span class="lc" style="position:absolute;left:85.1px;"></span></div>
   <div class="line" style="position:absolute;left:0;top:378px;height:25.2px;width:1003.6px;"><span class="ln" style="position:absolute;left:33.9px;width:20.23px;text-align:right;color:#858585">70</span><span class="lc" style="position:absolute;left:85.1px;"><span style="color:#6a9955">// Respond to flag changes in real<span class="hy">-</span>time</span></span></div>
   <div class="line" style="position:absolute;left:0;top:403.2px;height:25.2px;width:1003.6px;"><span class="ln" style="position:absolute;left:33.9px;width:20.23px;text-align:right;color:#858585">71</span><span class="lc" style="position:absolute;left:85.1px;"><span style="color:#4fc1ff">ldclient</span><span style="color:#d4d4d4">.</span><span style="color:#dcdcaa">on</span><span style="color:#e5b21b">(</span><span style="color:#ce9178">&#x27;change:dark<span class="hy">-</span>mode&#x27;</span><span style="color:#d4d4d4">, </span><span style="color:#569cd6">function</span><span style="color:#d4d4d4"> </span><span style="color:#d6006e">(</span><span style="color:#9cdcfe">isFeatureEnabled</span><span style="color:#d6006e">)</span><span style="color:#d4d4d4"> </span><span style="color:#ddd59a">{</span></span></div>
   <div class="line" style="position:absolute;left:0;top:428.4px;height:25.2px;width:1003.6px;"><span class="ln" style="position:absolute;left:33.9px;width:20.23px;text-align:right;color:#858585">72</span><span class="lc" style="position:absolute;left:85.1px;"><span style="color:#d4d4d4">  </span><span style="color:#4fc1ff">darkMode</span><span style="color:#d4d4d4">.</span><span style="color:#dcdcaa">setFeatureEnabled</span><span style="color:#d6006e">(</span><span style="color:#9cdcfe">isFeatureEnabled</span><span style="color:#d6006e">)</span></span></div>
   <div class="line" style="position:absolute;left:0;top:453.6px;height:25.2px;width:1003.6px;"><span class="ln" style="position:absolute;left:33.9px;width:20.23px;text-align:right;color:#858585">73</span><span class="lc" style="position:absolute;left:85.1px;"><span style="color:#ddd59a">}</span><span style="color:#e5b21b">)</span></span></div>
   <div class="line" style="position:absolute;left:0;top:478.8px;height:25.2px;width:1003.6px;"><span class="ln" style="position:absolute;left:33.9px;width:20.23px;text-align:right;color:#858585">74</span><span class="lc" style="position:absolute;left:85.1px;"></span></div>
   <div class="line" style="position:absolute;left:0;top:504px;height:25.2px;width:1003.6px;"><span class="ln" style="position:absolute;left:33.9px;width:20.23px;text-align:right;color:#858585">75</span><span class="lc" style="position:absolute;left:85.1px;"><span style="color:#4fc1ff">ldclient</span><span style="color:#d4d4d4">.</span><span style="color:#dcdcaa">on</span><span style="color:#e5b21b">(</span><span style="color:#ce9178">&#x27;change:space<span class="hy">-</span>mode&#x27;</span><span style="color:#d4d4d4">, </span><span style="color:#dcdcaa">setSpaceMode</span><span style="color:#e5b21b">)</span></span></div>
   <div class="line" style="position:absolute;left:0;top:529.2px;height:25.2px;width:1003.6px;"><span class="ln" style="position:absolute;left:33.9px;width:20.23px;text-align:right;color:#858585">76</span><span class="lc" style="position:absolute;left:85.1px;"></span></div>
  </div>
  <div style="position:absolute;left:894.6px;top:0px;width:1px;height:650px;background:#4a4a4a;"></div>
  <div style="position:absolute;left:989.1px;top:0px;width:1px;height:650px;background:#333333;"></div>
  <div style="position:absolute;left:0px;top:0px;width:1003.6px;height:5px;background:linear-gradient(#000000aa,#00000000);"></div>
  <div style="position:absolute;left:990.1px;top:352.1px;width:13.5px;height:162px;background:#424242;"></div>
  <div style="position:absolute;left:998.6px;top:82.1px;width:5px;height:7px;background:#6cb6f5;"></div>
  <div style="position:absolute;left:990.1px;top:387.6px;width:13.5px;height:1.5px;background:#9a9a9a;"></div>
  <div style="position:absolute;left:994.6px;top:389.1px;width:5px;height:5px;background:#9a9a9a;"></div>
  <div style="position:absolute;left:994.6px;top:433.1px;width:5px;height:5px;background:#9a9a9a;"></div>
  <div style="position:absolute;left:85.6px;top:634.1px;width:760px;height:13.6px;background:#424242;"></div>
 </div>
 <div id="statusbar" style="position:absolute;left:0px;top:738px;width:1375px;height:26.5px;background:#007acc;">
  <svg style="position:absolute;left:0px;top:0px;" width="1375" height="27" viewBox="1 738 1375 27" fill="none" stroke="#ffffff" stroke-width="1.15"><g transform="translate(0 -0.6)"><circle cx="23.8" cy="744.6" r="2"/><circle cx="31.5" cy="748.1" r="2"/><circle cx="23.8" cy="756.8" r="2"/><path d="M23.8 746.7 V754.7 M31.3 750.2 Q31 752.6 27.6 752.7 Q24.6 752.8 23.9 754.6"/></g></svg>
  <span class="t" style="left:39.2px;top:3px;font-size:14.4px;line-height:22px;color:#ffffff;letter-spacing:0.284px;">lesson-3</span>
  <svg style="position:absolute;left:0px;top:0px;" width="1375" height="27" viewBox="1 738 1375 27" fill="none" stroke="#ffffff" stroke-width="1.15"><path d="M122.6 755.2 H121.8 Q118.6 755 118.6 752 Q118.7 749.4 121.4 749 Q122 745.6 125.8 745.5 Q129.4 745.6 130.2 749 Q132.9 749.3 133 752 Q133 755 129.8 755.2 H129"/><path d="M125.8 758 V750.4 M123.4 752.6 L125.8 750.2 L128.2 752.6"/></svg>
  <svg style="position:absolute;left:0px;top:0px;" width="1375" height="27" viewBox="1 738 1375 27" fill="none" stroke="#ffffff" stroke-width="1.15"><circle cx="161.2" cy="751" r="6.6"/><path d="M158.4 748.2 L164 753.8 M164 748.2 L158.4 753.8"/></svg>
  <span class="t" style="left:173.5px;top:3px;font-size:14.4px;line-height:22px;color:#ffffff;letter-spacing:-0.409px;">0</span>
  <svg style="position:absolute;left:0px;top:0px;" width="1375" height="27" viewBox="1 738 1375 27" fill="none" stroke="#ffffff" stroke-width="1.15"><path d="M195.4 744.6 L202.8 757.4 H188 Z" stroke-linejoin="round"/><path d="M195.4 748.8 V753.4 M195.4 754.6 V756"/></svg>
  <span class="t" style="left:206.5px;top:3px;font-size:14.4px;line-height:22px;color:#ffffff;letter-spacing:-0.409px;">0</span>
  <svg style="position:absolute;left:0px;top:0px;" width="1375" height="27" viewBox="1 738 1375 27" fill="none" stroke="#ffffff" stroke-width="1.15"><circle cx="228.9" cy="751" r="6.6"/><path d="M228.9 750 V754.8 M228.9 747.2 V748.6"/></svg>
  <span class="t" style="left:239.6px;top:3px;font-size:14.4px;line-height:22px;color:#ffffff;letter-spacing:-2.009px;">1</span>
  <svg style="position:absolute;left:0px;top:0px;" width="1375" height="27" viewBox="1 738 1375 27" fill="none" stroke="#ffffff" stroke-width="1.15"><circle cx="269.6" cy="745.4" r="1.9"/><circle cx="269.6" cy="756.6" r="1.9"/><circle cx="278.6" cy="756.6" r="1.9"/><path d="M269.6 747.4 V754.6 M278.6 754.6 V749 Q278.6 746.2 275.8 746.2 H274 M276 744 L273.8 746.2 L276 748.4"/></svg>
  <span class="t" style="left:286.9px;top:3px;font-size:14.4px;line-height:22px;color:#ffffff;letter-spacing:-0.292px;">Create PR</span>
  <svg style="position:absolute;left:0px;top:0px;" width="1375" height="27" viewBox="1 738 1375 27" fill="none" stroke="#ffffff" stroke-width="1.4"><path d="M373.4 753.4 Q374.2 747.6 382.4 747.4 V743.4 L388.8 748.2 L382.4 753 V749.8 Q377 749.8 374.8 752.8" stroke-linejoin="miter"/><circle cx="379.4" cy="755.6" r="2.5"/></svg>
  <span class="t" style="left:392.2px;top:3px;font-size:14.4px;line-height:22px;color:#ffffff;letter-spacing:-0.074px;">Live Share</span>
  <svg style="position:absolute;left:0px;top:0px;" width="1375" height="27" viewBox="1 738 1375 27" fill="none" stroke="#ffffff" stroke-width="1.15"><path d="M482.6 752 L486.4 756.2 L495.6 744.6"/></svg>
  <span class="t" style="left:501px;top:3px;font-size:14.4px;line-height:22px;color:#ffffff;letter-spacing:0.178px;">javascript</span>
  <span class="t" style="left:568.8px;top:3px;font-size:14.4px;line-height:22px;color:#ffffff;letter-spacing:0.259px;">|</span>
  <svg style="position:absolute;left:0px;top:0px;" width="1375" height="27" viewBox="1 738 1375 27" fill="none" stroke="#ffffff" stroke-width="1.15"><path d="M580.2 752 L584 756.2 L593.2 744.6"/></svg>
  <span class="t" style="left:598.2px;top:3px;font-size:14.4px;line-height:22px;color:#ffffff;letter-spacing:0.143px;">client.js</span>
  <span class="t" style="left:815.9px;top:3px;font-size:14.4px;line-height:22px;color:#ffffff;letter-spacing:-0.012px;">Ln 61, Col 35</span>
  <span class="t" style="left:921.5px;top:3px;font-size:14.4px;line-height:22px;color:#ffffff;letter-spacing:0.084px;">Spaces: 2</span>
  <span class="t" style="left:1006px;top:3px;font-size:14.4px;line-height:22px;color:#ffffff;letter-spacing:0.281px;">UTF-8</span>
  <span class="t" style="left:1068.4px;top:3px;font-size:14.4px;line-height:22px;color:#ffffff;letter-spacing:-0.802px;">LF</span>
  <span class="t" style="left:1103.2px;top:3px;font-size:14.4px;line-height:22px;color:#ffffff;letter-spacing:0.107px;">JavaScript</span>
  <svg style="position:absolute;left:0px;top:0px;" width="1375" height="27" viewBox="1 738 1375 27" fill="none" stroke="#ffffff" stroke-width="1.15"><path d="M1192.6 752.6 L1194.8 755.8 L1202.6 745 M1198.6 754.2 L1199.8 755.8 L1207.6 745" stroke-width="1"/></svg>
  <span class="t" style="left:1212.8px;top:3px;font-size:14.4px;line-height:22px;color:#ffffff;letter-spacing:-0.204px;">ESLint</span>
  <span class="t" style="left:1274px;top:3px;font-size:14.4px;line-height:22px;color:#ffffff;letter-spacing:0.211px;">Prettier</span>
  <svg style="position:absolute;left:0px;top:0px;" width="1375" height="27" viewBox="1 738 1375 27" fill="none" stroke="#ffffff" stroke-width="1.15"><path d="M1345 755.4 H1357 L1355.6 753.2 V749 Q1355.4 744 1351 743.6 Q1346.6 744 1346.4 749 V753.2 Z" stroke-linejoin="round"/><path d="M1349.4 755.8 Q1351 758.6 1352.6 755.8"/></svg>
 </div>
 <div id="hover" style="position:absolute;left:983.4px;top:224.1px;width:304.2px;height:167.9px;background:#454545;">
  <div id="hover-content" style="position:absolute;left:1px;top:1px;width:302.2px;height:165.9px;background:#252526;">
   <div style="position:absolute;left:9.5px;top:11.65px;width:15.3px;height:8.3px;background:#27ae60;border-radius:4.15px;"></div>
   <div style="position:absolute;left:17.65px;top:13.1px;width:5.4px;height:5.4px;background:#252526;border-radius:50%;"></div>
   <span class="t" style="left:29.4px;top:4.9px;font-size:16.6px;line-height:25px;color:#cccccc;letter-spacing:0.384px;">toggle-runner / test / </span>
   <span class="t" style="left:191.4px;top:4.9px;font-size:16.6px;line-height:25px;color:#3794ff;font-weight:700;letter-spacing:0.373px;">space-mode</span>
   <span class="t" style="left:10px;top:38.9px;font-size:16.6px;line-height:25px;color:#cccccc;letter-spacing:0.177px;">Transport game to space</span>
   <div style="position:absolute;left:10px;top:80.8px;width:14.9px;height:11.2px;background:#cccccc;border-radius:1.5px;"></div>
   <svg style="position:absolute;left:10.6px;top:81.9px;" width="14" height="10" viewBox="0 0 14 10" fill="none" stroke="#252526" stroke-width="1.45"><g transform="translate(0.9 0) scale(1.0000 1.0000)"><path d="M1.2 4.5 H10.6 M4.1 1.6 L1.2 4.5 L4.1 7.4 M7.7 1.6 L10.6 4.5 L7.7 7.4"/></g></svg>
   <span class="t" style="left:31px;top:73.9px;font-size:16.6px;line-height:25px;color:#cccccc;font-weight:700;letter-spacing:0.056px;">Variations</span>
   <div style="position:absolute;left:16.9px;top:120.5px;width:4.4px;height:4.4px;background:#cccccc;border-radius:50%;"></div>
   <div style="position:absolute;left:16.9px;top:146.5px;width:4.4px;height:4.4px;background:#cccccc;border-radius:50%;"></div>
   <div style="position:absolute;left:33.8px;top:111.2px;width:52.6px;height:20.3px;background:#1a1a1b;border-radius:3px;"></div>
   <div style="position:absolute;left:91.8px;top:111.2px;width:140.3px;height:20.3px;background:#1a1a1b;border-radius:3px;"></div>
   <div style="position:absolute;left:33.8px;top:137px;width:62.4px;height:20.5px;background:#1a1a1b;border-radius:3px;"></div>
   <div style="position:absolute;left:101.5px;top:137px;width:59.8px;height:20.5px;background:#1a1a1b;border-radius:3px;"></div>
   <span class="t" style="left:40.2px;top:109.9px;font-size:16.8px;line-height:25px;color:#d0d0d0;font-family:'DejaVu Sans Mono','Liberation Mono',monospace;">true</span>
   <span class="t" style="left:101px;top:114.9px;font-size:13px;line-height:20px;color:#d0d0d0;font-family:'DejaVu Sans Mono','Liberation Mono',monospace;">→</span>
   <span class="t" style="left:115.2px;top:109.9px;font-size:16.8px;line-height:25px;color:#d0d0d0;font-family:'DejaVu Sans Mono','Liberation Mono',monospace;">fallthrough</span>
   <span class="t" style="left:40.2px;top:135.9px;font-size:16.8px;line-height:25px;color:#d0d0d0;font-family:'DejaVu Sans Mono','Liberation Mono',monospace;">false</span>
   <span class="t" style="left:111px;top:140.9px;font-size:13px;line-height:20px;color:#d0d0d0;font-family:'DejaVu Sans Mono','Liberation Mono',monospace;">→</span>
   <span class="t" style="left:124.2px;top:135.9px;font-size:16.8px;line-height:25px;color:#d0d0d0;font-family:'DejaVu Sans Mono','Liberation Mono',monospace;">off</span>
  </div>
 </div>
</div>
</body></html>
